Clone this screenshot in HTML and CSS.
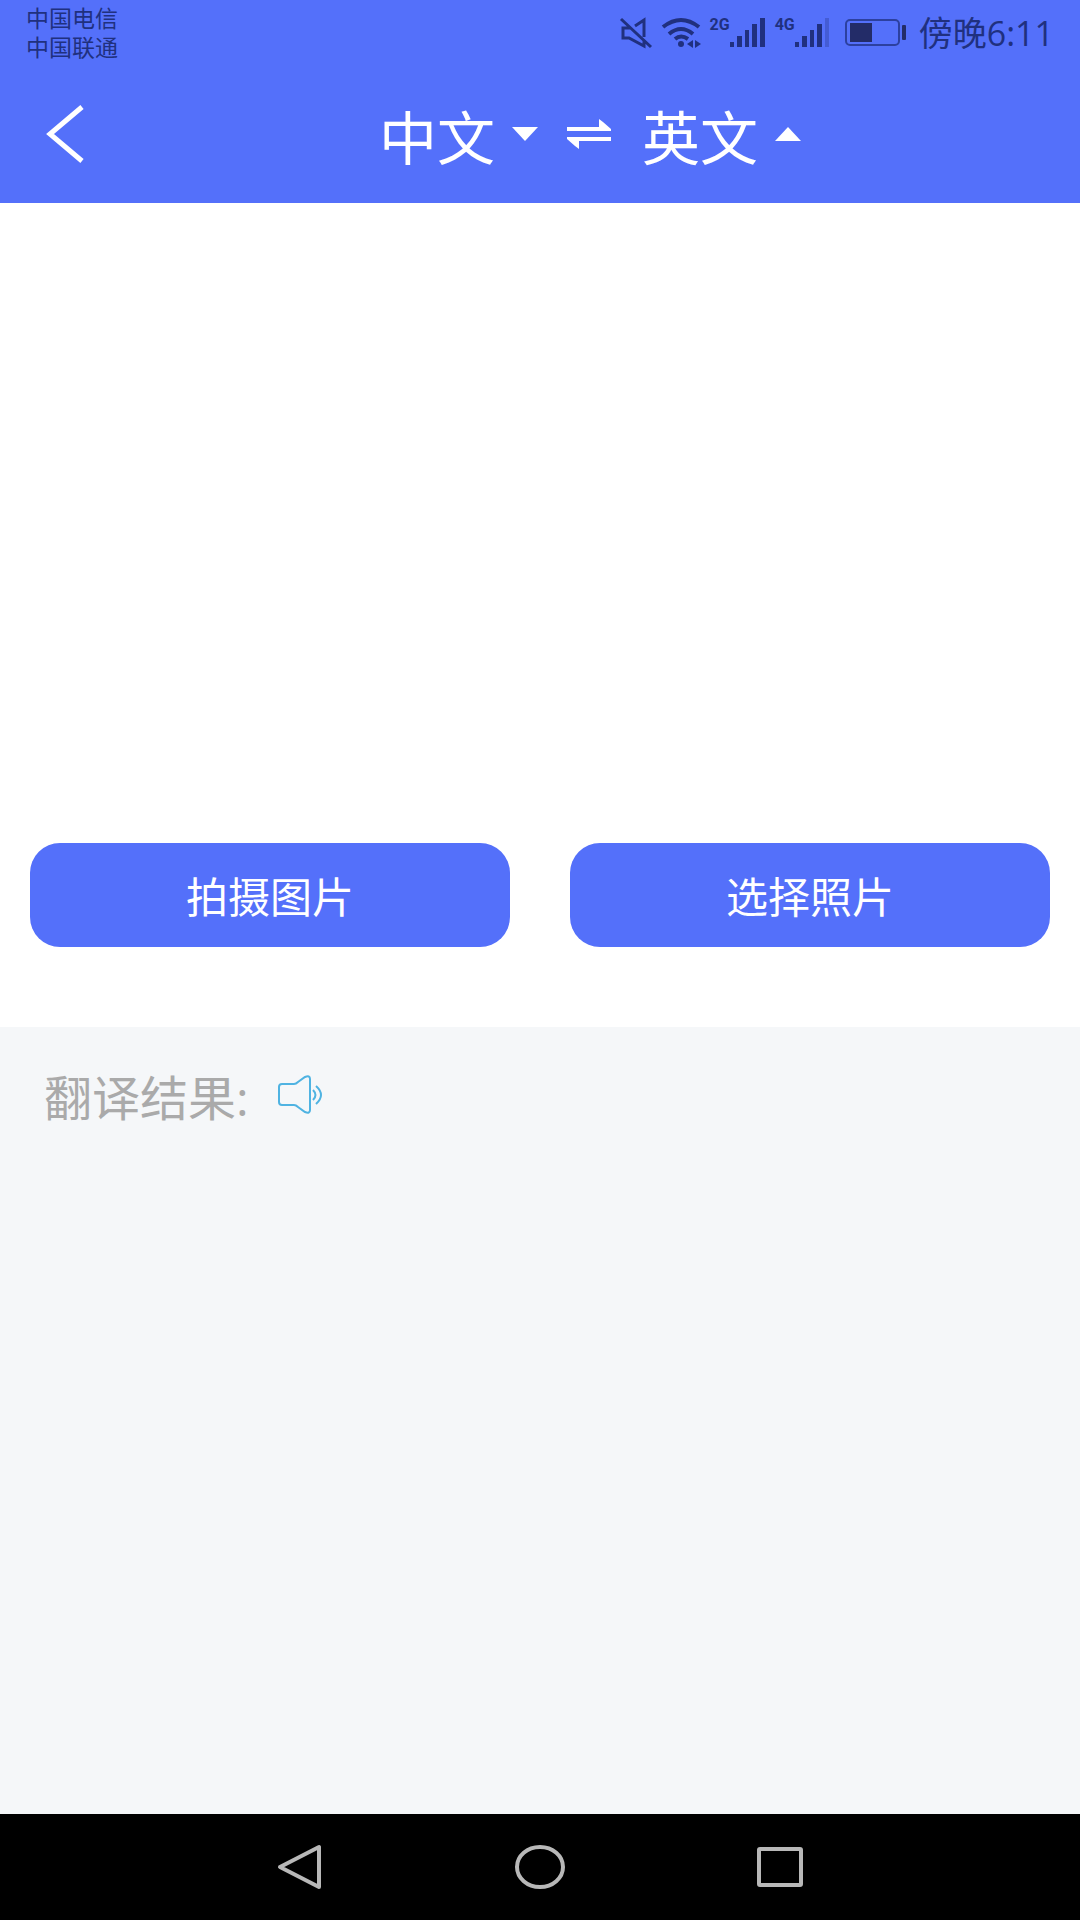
FILE: index.html
```html
<!DOCTYPE html>
<html lang="zh-CN">
<head>
<meta charset="utf-8">
<meta name="viewport" content="width=device-width, initial-scale=1">
<title>图片翻译</title>
<link rel="stylesheet" href="styles.css">
</head>
<body>
<div class="app">
  <header class="top">
    <div class="status">
      <div class="carriers">
        <span>中国电信</span>
        <span>中国联通</span>
      </div>
      <div class="indicators">
        <svg class="icon-mute" width="34" height="32" viewBox="0 0 34 32" fill="none" stroke="currentColor" stroke-width="3">
          <path d="M2 2L32 30M25 20V3L16 9M12 11H4V21H10L25 29V24"/>
        </svg>
        <svg class="icon-wifi" width="40" height="32" viewBox="0 0 40 32" fill="none" stroke="currentColor" stroke-width="4">
          <path d="M2 10Q20-4 38 10M8 17Q20 7 32 17M14 22Q20 17 27 22"/>
          <circle cx="20" cy="27" r="3" fill="currentColor" stroke="none"/>
          <path d="M32 23V31L26 27ZM34 23V31L40 27Z" fill="currentColor" stroke="none"/>
        </svg>
        <div class="signal">
          <span>2G</span>
          <svg width="36" height="30" viewBox="0 0 36 30" fill="currentColor">
            <path d="M0 24h4v5h-4zM7 18h5v11H7zM15 12h4v17h-4zM22 6h5v23h-5zM30 0h5v29h-5z"/>
          </svg>
        </div>
        <div class="signal">
          <span>4G</span>
          <svg width="36" height="30" viewBox="0 0 36 30" fill="currentColor">
            <path d="M0 24h4v5h-4zM7 18h5v11H7zM15 12h4v17h-4zM22 6h5v23h-5z"/>
            <path d="M30 0h4v29h-4z" opacity=".3"/>
          </svg>
        </div>
        <svg class="icon-battery" width="62" height="28" viewBox="0 0 62 28" fill="none">
          <rect x="1" y="1" width="53" height="25" rx="4" stroke="#2c409f" stroke-width="2"/>
          <rect x="5" y="4" width="22" height="19" fill="#232c68"/>
          <rect x="57" y="6" width="4" height="15" rx="1" fill="#232c68"/>
        </svg>
        <time class="clock">傍晚6:11</time>
      </div>
    </div>
    <div class="bar">
      <button class="back" type="button" aria-label="返回">
        <svg width="38" height="60" viewBox="0 0 38 60" fill="none" stroke="currentColor" stroke-width="5">
          <path d="M36 3L4 30L36 57"/>
        </svg>
      </button>
      <div class="languages">
        <label class="language">
          <select class="language-select" aria-label="源语言">
            <option selected>中文</option>
            <option>英文</option>
          </select>
          <svg width="26" height="14" viewBox="0 0 26 14" fill="currentColor"><path d="M0 0H26L13 14Z"/></svg>
        </label>
        <button class="swap" type="button" aria-label="交换语言">
          <svg width="46" height="32" viewBox="0 0 46 32" fill="currentColor">
            <path d="M1 9H33V1L37 4L45 11V13H1ZM45 19H1V21L9 28L13 31V23H45Z"/>
          </svg>
        </button>
        <label class="language">
          <select class="language-select" aria-label="目标语言">
            <option>中文</option>
            <option selected>英文</option>
          </select>
          <svg width="26" height="14" viewBox="0 0 26 14" fill="currentColor"><path d="M0 14H26L13 0Z"/></svg>
        </label>
      </div>
    </div>
  </header>
  <main class="content">
    <section class="source">
      <div class="preview"></div>
      <div class="actions">
        <button class="action" type="button">拍摄图片</button>
        <button class="action" type="button">选择照片</button>
      </div>
    </section>
    <section class="result">
      <h2 class="result-title">翻译结果:</h2>
      <button class="speak" type="button" aria-label="朗读">
        <svg width="48" height="40" viewBox="0 0 48 40" fill="none" stroke="#4fb3e2" stroke-width="2">
          <path d="M5 9H17Q19 9 21 7L28 2Q33 0 33 4V35Q33 39 28 37L21 32Q19 30 17 30H5Q2 30 2 27V12Q2 9 5 9Z"/>
          <path d="M36 15Q41 20 36 25M39 11Q49 20 39 29"/>
        </svg>
      </button>
    </section>
  </main>
  <nav class="navigation">
    <button type="button" aria-label="返回上一页">
      <svg width="52" height="54" viewBox="0 0 52 54"><path d="M6 27L45 7V47Z"/></svg>
    </button>
    <button type="button" aria-label="主屏幕">
      <svg width="52" height="54" viewBox="0 0 52 54"><ellipse cx="26" cy="27" rx="23" ry="20"/></svg>
    </button>
    <button type="button" aria-label="最近任务">
      <svg width="52" height="54" viewBox="0 0 52 54"><rect x="5" y="9" width="42" height="36" rx="1"/></svg>
    </button>
  </nav>
</div>
</body>
</html>
```

FILE: styles.css
```css
* {
  box-sizing: border-box;
}

body {
  margin: 0;
  font-family: "Open Sans", "Noto Sans CJK SC", sans-serif;
  background: #fff;
}

button,
select {
  margin: 0;
  padding: 0;
  border: 0;
  background: none;
  color: inherit;
  font: inherit;
  cursor: pointer;
}

svg {
  display: block;
  flex: none;
}

.app {
  display: flex;
  flex-direction: column;
  min-height: 100vh;
}

.top {
  background: #5470fa;
  color: #fff;
}

.status {
  display: flex;
  justify-content: space-between;
  align-items: flex-start;
  height: 66px;
  padding: 4px 26px 0;
  color: #20307f;
}

.carriers {
  display: flex;
  flex-direction: column;
  font-size: 23px;
  line-height: 29px;
}

.indicators {
  display: flex;
  align-items: center;
  height: 58px;
}

.icon-wifi {
  margin-left: 8px;
}

.signal {
  display: flex;
  align-items: flex-start;
  margin-left: 9px;
  font-family: Roboto, sans-serif;
  font-size: 16px;
  font-weight: 700;
  line-height: 14px;
}

.icon-battery {
  margin-left: 14px;
}

.clock {
  margin-left: 12px;
  font-size: 34px;
  line-height: 40px;
}

.bar {
  display: flex;
  align-items: center;
  height: 137px;
  padding-bottom: 2px;
}

.back {
  display: flex;
  align-items: center;
  width: 100px;
  height: 100px;
  padding-left: 46px;
}

.languages {
  flex: 1;
  display: flex;
  justify-content: center;
  align-items: center;
}

.language {
  display: flex;
  align-items: center;
  gap: 16px;
}

.language-select {
  appearance: none;
  padding-top: 8px;
  font-size: 58px;
  line-height: 80px;
}

.swap {
  margin: 0 30px 0 28px;
}

.content {
  flex: 1;
  display: flex;
  flex-direction: column;
}

.source {
  padding: 0 30px 80px;
}

.preview {
  height: 640px;
}

.actions {
  display: grid;
  grid-template-columns: 1fr 1fr;
  gap: 60px;
}

.action {
  height: 104px;
  padding-top: 4px;
  border-radius: 30px;
  background: #5470fa;
  color: #fff;
  font-size: 42px;
  line-height: 60px;
}

.result {
  flex: 1;
  display: flex;
  align-items: flex-start;
  gap: 28px;
  padding: 41px 44px;
  background: #f5f7f9;
}

.result-title {
  margin: 0;
  color: #aaa;
  font-size: 48px;
  font-weight: 400;
  line-height: 60px;
}

.speak {
  display: flex;
  align-items: center;
  height: 54px;
}

.navigation {
  display: flex;
  justify-content: center;
  gap: 188px;
  padding: 26px 0;
  background: #000;
}

.navigation svg {
  fill: none;
  stroke: #b8b8b8;
  stroke-width: 4;
  stroke-linejoin: round;
}
```
